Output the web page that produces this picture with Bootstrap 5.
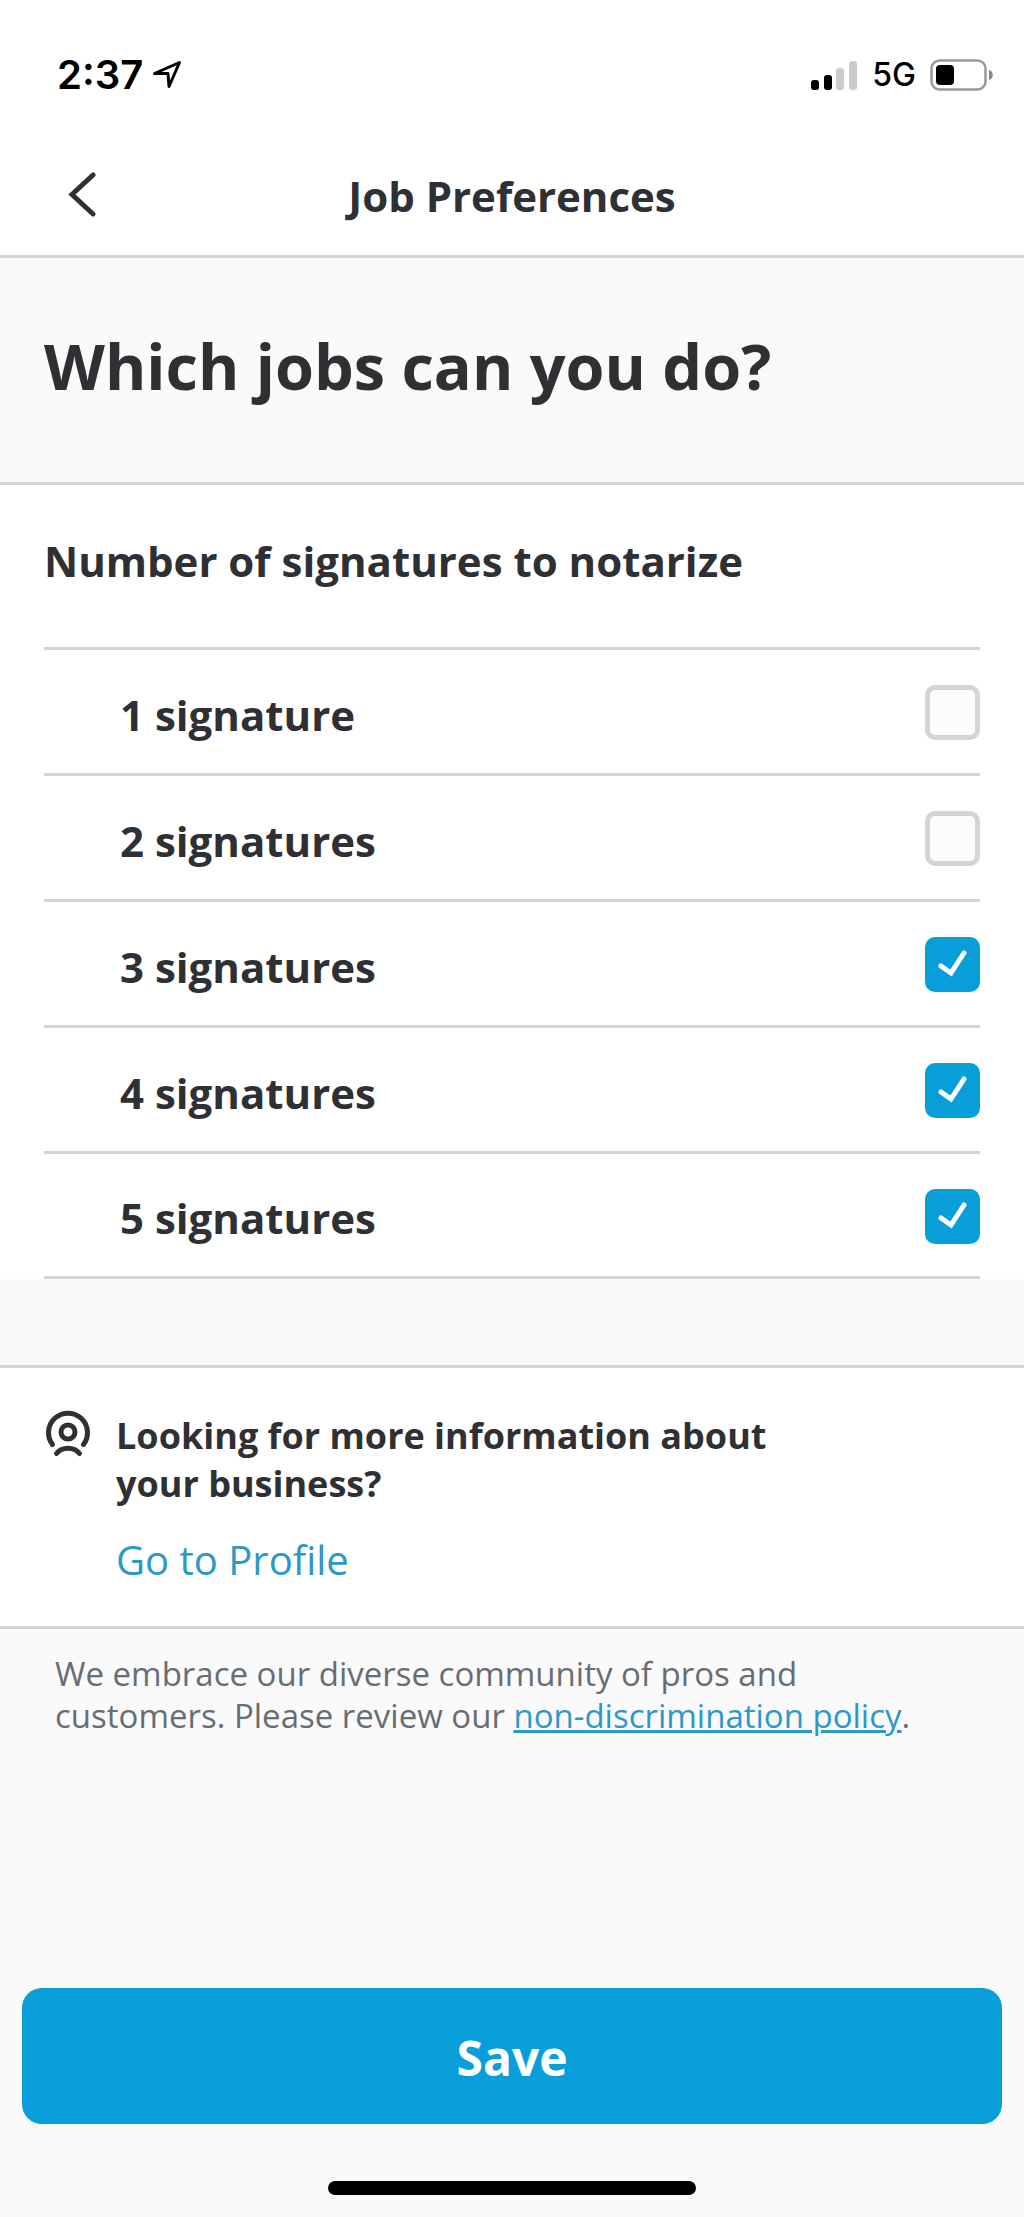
<!DOCTYPE html>
<html lang="en">
<head>
<meta charset="utf-8">
<meta name="viewport" content="width=device-width, initial-scale=1">
<title>Job Preferences</title>
<link href="https://cdn.jsdelivr.net/npm/bootstrap@5.3.0/dist/css/bootstrap.min.css" rel="stylesheet">
<style>
  :root { --ink: #2f3033; --rule: #d3d4d5; --brand: #089eda; --link: #2c98c6; --wash: #fafafa; }
  body { font-family: "Open Sans", "Noto Sans", sans-serif; color: var(--ink); background: var(--wash); }
  .status-strip { height: 140px; padding: 10px 30px 0 57px; font-family: Inter, sans-serif; color: #000; }
  .status-group { gap: 14px; }
  .clock { font-size: 40px; line-height: 48px; font-weight: 600; }
  .network { font-size: 32px; line-height: 48px; font-weight: 500; }
  .topbar { height: 118px; border-bottom: 3px solid var(--rule); padding: 0 56px 4px; }
  .topbar-side { width: 52px; padding-bottom: 4px; }
  .rule-top { border-top: 3px solid var(--rule); }
  .rule-bottom { border-bottom: 3px solid var(--rule); }
  .gutter { padding-left: 44px; padding-right: 44px; }
  .text-title { font-size: 42px; line-height: 56px; font-weight: 700; }
  .page-heading { font-size: 63px; line-height: 80px; font-weight: 700; padding-top: 68px; padding-bottom: 76px; }
  .group-heading { padding-top: 48px; padding-bottom: 58px; }
  .choice { height: 126px; padding-left: 76px; padding-top: 6px; }
  .choice:last-child { height: 125px; }
  .form-check-input.tick { width: 55px; height: 55px; margin: 0 0 4px; border: 5px solid var(--rule); border-radius: 10px; background-color: #fcfcfe; }
  .form-check-input.tick:checked { background-color: var(--brand); border-color: var(--brand);
    background-size: 45px 45px;
    background-image: url("data:image/svg+xml,%3csvg xmlns='http://www.w3.org/2000/svg' viewBox='0 0 45 45'%3e%3cpath fill='none' stroke='%23fff' stroke-width='5' stroke-linecap='round' d='M11 24l10 7L34 11'/%3e%3c/svg%3e"); }
  .info-panel { margin-top: 86px; padding-top: 42px; padding-bottom: 42px; gap: 24px; }
  .info-copy { max-width: 720px; padding-top: 2px; }
  .info-title { font-size: 36px; line-height: 48px; font-weight: 700; }
  .info-link { font-size: 40px; line-height: 48px; color: var(--link); margin-top: 28px; }
  .policy { font-size: 33px; line-height: 42px; color: #676d73; padding: 24px 30px 0 55px; max-width: 980px; }
  .policy a { color: var(--link); }
  .save-area { padding: 0 22px 22px; }
  .btn.save-btn { height: 136px; padding-top: 10px; border-radius: 20px; background: var(--brand); color: #fff; font-size: 48px; font-weight: 700; }
  .home-bar { width: 37.5%; height: 14px; border-radius: 7px; background: #000; margin-top: 57px; }
</style>
</head>
<body>
<div class="d-flex flex-column min-vh-100">
  <div class="bg-white">
    <div class="status-strip d-flex align-items-center justify-content-between">
      <div class="d-flex align-items-center gap-2">
        <span class="clock">2:37</span>
        <svg width="30" height="30" viewBox="0 0 30 30" fill="none" stroke="#000" stroke-width="3" stroke-linejoin="round" aria-hidden="true"><path d="M3.500 13.500L28.500 2.500 18 26.500 17 13.500Z"/></svg>
      </div>
      <div class="status-group d-flex align-items-center">
        <svg width="47" height="30" viewBox="0 0 47 30" aria-hidden="true"><rect y="20" width="8" height="10" rx="3"/><rect x="13" y="15" width="8" height="15" rx="3"/><rect x="25" y="8" width="8" height="22" rx="3" fill="#cbcbcb"/><rect x="38" y="1" width="8" height="29" rx="3" fill="#cbcbcb"/></svg>
        <span class="network">5G</span>
        <svg width="64" height="32" viewBox="0 0 64 32" aria-hidden="true"><rect x="1.500" y="1.500" width="54" height="29" rx="8" fill="none" stroke="#999" stroke-width="2.500"/><rect x="6" y="6" width="18" height="20" rx="4"/><path d="M59 11c5 1 5 9 0 10z" fill="#888"/></svg>
      </div>
    </div>
    <header class="topbar d-flex align-items-center justify-content-between">
      <div class="topbar-side">
        <button type="button" class="btn p-0 border-0 d-flex px-2" aria-label="Back">
          <svg width="36" height="46" viewBox="0 0 36 46" fill="none" stroke="#2f3033" stroke-width="5" stroke-linecap="round"><path d="M29 4L8 23.500 29 43"/></svg>
        </button>
      </div>
      <div class="text-title">Job Preferences</div>
      <div class="topbar-side"></div>
    </header>
  </div>

  <main>
    <h1 class="page-heading gutter m-0">Which jobs can you do?</h1>

    <section class="bg-white rule-top">
      <form id="prefs" class="gutter">
        <fieldset>
          <legend class="text-title group-heading m-0 rule-bottom">Number of signatures to notarize</legend>
          <div class="choice rule-bottom d-flex align-items-center justify-content-between">
            <label class="text-title" for="sig1">1 signature</label><input class="form-check-input tick" type="checkbox" id="sig1">
          </div>
          <div class="choice rule-bottom d-flex align-items-center justify-content-between">
            <label class="text-title" for="sig2">2 signatures</label><input class="form-check-input tick" type="checkbox" id="sig2">
          </div>
          <div class="choice rule-bottom d-flex align-items-center justify-content-between">
            <label class="text-title" for="sig3">3 signatures</label><input class="form-check-input tick" type="checkbox" id="sig3" checked>
          </div>
          <div class="choice rule-bottom d-flex align-items-center justify-content-between">
            <label class="text-title" for="sig4">4 signatures</label><input class="form-check-input tick" type="checkbox" id="sig4" checked>
          </div>
          <div class="choice rule-bottom d-flex align-items-center justify-content-between">
            <label class="text-title" for="sig5">5 signatures</label><input class="form-check-input tick" type="checkbox" id="sig5" checked>
          </div>
        </fieldset>
      </form>
    </section>

    <section class="info-panel gutter bg-white rule-top rule-bottom d-flex align-items-start">
      <svg class="flex-shrink-0" width="48" height="48" viewBox="0 0 48 48" fill="none" stroke="#2f3033" stroke-width="5" stroke-linecap="round" aria-hidden="true"><path d="M8.500 34.500A19.500 19.500 0 1 1 39.500 34.500"/><circle cx="24" cy="22" r="7"/><path d="M12.500 43.500C18 36.500 30 36.500 35.500 43.500"/></svg>
      <div class="info-copy">
        <h2 class="info-title m-0">Looking for more information about your business?</h2>
        <a class="info-link d-inline-block text-decoration-none" href="#profile">Go to Profile</a>
      </div>
    </section>

    <p class="policy m-0">We embrace our diverse community of pros and customers. Please review our <a href="#policy">non-discrimination policy</a>.</p>
  </main>

  <footer class="save-area mt-auto">
    <button type="submit" form="prefs" class="btn save-btn w-100 border-0">Save</button>
    <div class="home-bar mx-auto"></div>
  </footer>
</div>
<script src="https://cdn.jsdelivr.net/npm/bootstrap@5.3.0/dist/js/bootstrap.bundle.min.js"></script>
</body>
</html>
